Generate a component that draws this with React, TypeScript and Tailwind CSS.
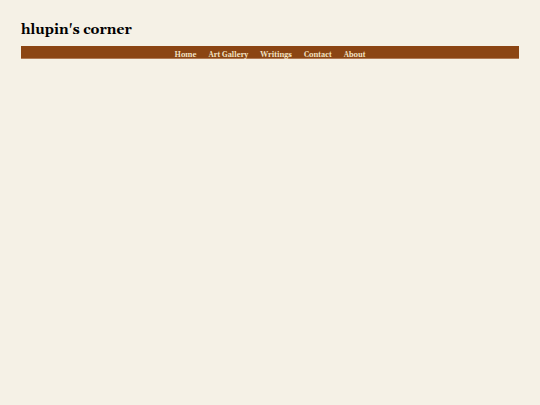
const navLinks = [
    { name: 'Home', href: '#home' },
    { name: 'Art Gallery', href: '#art' },
    { name: 'Writings', href: '#writings' },
    { name: 'Contact', href: '#contact' },
    { name: 'About', href: '#about' },
];

export default function App() {
    return (
        <div className="min-h-screen bg-[#f5f1e6] px-[21px] pt-5 font-[Georgia,Gelasio,'Liberation_Serif',serif]">
            <header>
                <h1 className="text-[14px] leading-5 font-bold text-black">hlupin's corner</h1>
                <nav className="mt-[6px] border-b border-[#b07a55] bg-[#8b4513] pt-[6px]">
                    <ul className="flex items-center justify-center gap-3">
                        {navLinks.map((link) => (
                            <li key={link.name} className="flex">
                                <a href={link.href} className="text-[7px] leading-[6px] font-bold text-[#f5e6c8]">
                                    {link.name}
                                </a>
                            </li>
                        ))}
                    </ul>
                </nav>
            </header>
        </div>
    );
}
